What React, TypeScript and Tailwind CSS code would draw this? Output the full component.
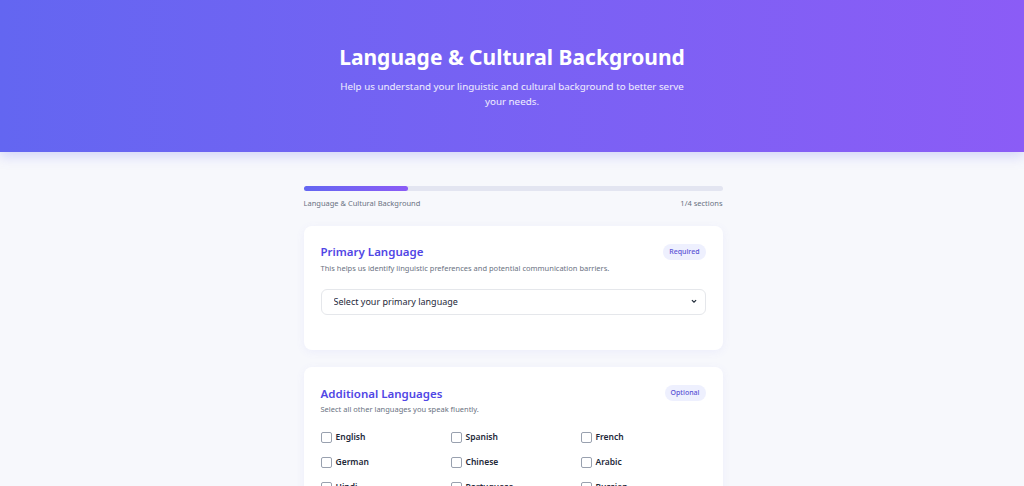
import React, { useState } from "react";

const languages = [
  "English",
  "Spanish",
  "French",
  "German",
  "Chinese",
  "Arabic",
  "Hindi",
  "Portuguese",
  "Russian",
];

const Badge = ({ children }: { children: React.ReactNode }) => (
  <span className="rounded-full bg-[#eef0fe] px-[6px] py-[3px] text-[7px] font-medium leading-[10px] text-[#5a52d5]">
    {children}
  </span>
);

const SectionCard = ({
  title,
  badge,
  description,
  top,
  gap,
  children,
}: {
  title: string;
  badge: string;
  description: string;
  top: string;
  gap: string;
  children: React.ReactNode;
}) => (
  <section
    className={`rounded-[8px] bg-white px-[17px] pb-[35px] shadow-[0_2px_10px_rgba(99,102,241,0.07)] ${top}`}
  >
    <div className="flex items-center justify-between">
      <h2 className="text-[11.5px] font-semibold text-[#5046e5]">{title}</h2>
      <Badge>{badge}</Badge>
    </div>
    <p className="mt-[2px] text-[7.5px] text-gray-500">{description}</p>
    <div className={gap}>{children}</div>
  </section>
);

export default function App() {
  const [primary, setPrimary] = useState("");
  const [checked, setChecked] = useState<string[]>([]);

  const toggle = (lang: string) =>
    setChecked((prev) =>
      prev.includes(lang) ? prev.filter((l) => l !== lang) : [...prev, lang]
    );

  return (
    <div className="min-h-screen bg-[#f7f8fc] font-['Noto_Sans',sans-serif]">
      <header className="flex h-[152px] flex-col items-center bg-gradient-to-r from-[#6366f1] to-[#8b5cf6] pt-[41px] text-center text-white shadow-[0_4px_12px_rgba(99,102,241,0.25)]">
        <h1 className="text-[21px] font-bold leading-[32px]">
          Language &amp; Cultural Background
        </h1>
        <p className="mt-[6px] max-w-[345px] text-[9.8px] leading-[15px] text-white/90">
          Help us understand your linguistic and cultural background to better
          serve your needs.
        </p>
      </header>

      <main className="mx-auto w-[419px] translate-x-[1px] pt-[34px]">
        <div className="h-[5px] w-full rounded-full bg-[#e3e5f1]">
          <div className="h-full w-1/4 rounded-full bg-gradient-to-r from-[#6366f1] to-[#8b5cf6]" />
        </div>
        <div className="mt-[7px] flex justify-between text-[7.5px] text-gray-500">
          <span>Language &amp; Cultural Background</span>
          <span>1/4 sections</span>
        </div>

        <div className="mt-[17px] flex flex-col gap-[17px]">
          <SectionCard
            title="Primary Language"
            badge="Required"
            description="This helps us identify linguistic preferences and potential communication barriers."
            top="pt-[17px]"
            gap="mt-[13px]"
          >
            <div className="relative">
              <select
                value={primary}
                onChange={(e) => setPrimary(e.target.value)}
                className="h-[26px] w-full appearance-none rounded-[6px] border border-[#e5e7eb] bg-white px-[12px] text-[9px] text-gray-800"
              >
                <option value="">Select your primary language</option>
                {languages.map((l) => (
                  <option key={l} value={l}>
                    {l}
                  </option>
                ))}
              </select>
              <svg
                viewBox="0 0 10 10"
                className="pointer-events-none absolute top-1/2 right-[9px] h-[6px] w-[6px] -translate-y-1/2"
              >
                <path
                  d="M1.5 3.5 L5 7 L8.5 3.5"
                  fill="none"
                  stroke="#1f2937"
                  strokeWidth="2"
                />
              </svg>
            </div>
          </SectionCard>

          <SectionCard
            title="Additional Languages"
            badge="Optional"
            description="Select all other languages you speak fluently."
            top="pt-[18px]"
            gap="mt-[16px]"
          >
            <div className="grid grid-cols-3 gap-x-[5px] gap-y-[13px]">
              {languages.map((l) => (
                <label
                  key={l}
                  className="flex cursor-pointer items-center gap-[4px] text-[8.5px] font-semibold leading-[12px] text-gray-800"
                >
                  <input
                    type="checkbox"
                    checked={checked.includes(l)}
                    onChange={() => toggle(l)}
                    className="h-[11px] w-[11px] appearance-none rounded-[2px] border border-gray-400 bg-white checked:bg-[#6366f1]"
                  />
                  {l}
                </label>
              ))}
            </div>
          </SectionCard>
        </div>
      </main>
    </div>
  );
}
